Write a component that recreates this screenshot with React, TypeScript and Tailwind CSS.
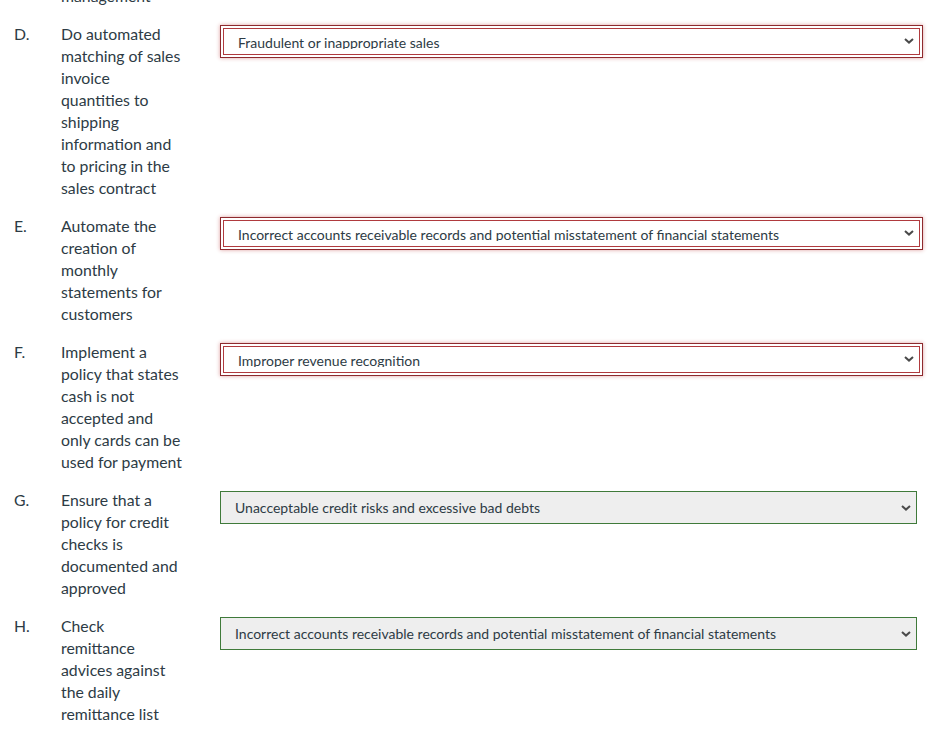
import React from "react";

type Row = { letter: string; lines: string[]; answer: string; state: "wrong" | "right" };

const rows: Row[] = [
  {
    letter: "D.",
    lines: ["Do automated", "matching of sales", "invoice", "quantities to", "shipping", "information and", "to pricing in the", "sales contract"],
    answer: "Fraudulent or inappropriate sales",
    state: "wrong",
  },
  {
    letter: "E.",
    lines: ["Automate the", "creation of", "monthly", "statements for", "customers"],
    answer: "Incorrect accounts receivable records and potential misstatement of financial statements",
    state: "wrong",
  },
  {
    letter: "F.",
    lines: ["Implement a", "policy that states", "cash is not", "accepted and", "only cards can be", "used for payment"],
    answer: "Improper revenue recognition",
    state: "wrong",
  },
  {
    letter: "G.",
    lines: ["Ensure that a", "policy for credit", "checks is", "documented and", "approved"],
    answer: "Unacceptable credit risks and excessive bad debts",
    state: "right",
  },
  {
    letter: "H.",
    lines: ["Check", "remittance", "advices against", "the daily", "remittance list"],
    answer: "Incorrect accounts receivable records and potential misstatement of financial statements",
    state: "right",
  },
];

function Chevron({ className }: { className?: string }) {
  return (
    <svg width="10" height="6" viewBox="0 0 10 6" className={className}>
      <path d="M1 1 L5 4.6 L9 1" fill="none" stroke="#4a4a4a" strokeWidth="2" />
    </svg>
  );
}

function WrongSelect({ answer }: { answer: string }) {
  return (
    <div className="mt-[2px] w-[703px] h-[33px] border border-[#8e2a2e] p-[2px] shadow-[0_0_4px_rgba(180,40,40,0.45)] bg-white">
      <div className="relative h-[27px] border border-[#b03a3e] bg-white pl-[14px]">
        <div className="mt-[5px] h-[15px] overflow-hidden text-[14px] leading-[18px] text-[#2d3b45] whitespace-nowrap">
          {answer}
        </div>
        <Chevron className="absolute right-[5px] top-[9px]" />
      </div>
    </div>
  );
}

function RightSelect({ answer }: { answer: string }) {
  return (
    <div className="relative mt-[2px] w-[697px] h-[33px] border border-[#3f7a3a] bg-[#eeeeee] pl-[14px]">
      <div className="pt-[6px] text-[14px] leading-[20px] text-[#2d3b45] whitespace-nowrap">{answer}</div>
      <Chevron className="absolute right-[5px] top-[13px]" />
    </div>
  );
}

export default function App() {
  return (
    <div
      className="bg-white w-[937px] h-[736px] overflow-hidden text-[#2d3b45]"
      style={{ fontFamily: "Lato, 'Noto Sans', sans-serif" }}
    >
      <div className="mt-[-15px] flex pl-[14px] text-[15.8px] leading-[22px]">
        <div className="w-[47px]" />
        <div className="w-[122px]">management</div>
      </div>
      <div className="flex flex-col gap-[16px] mt-[16px]">
        {rows.map((r) => (
          <div key={r.letter} className="flex pl-[14px]">
            <div className="w-[47px] text-[15.8px] leading-[22px]">{r.letter}</div>
            <div className="w-[122px] text-[15.8px] leading-[22px]">
              {r.lines.map((l, i) => (
                <div key={i} className="whitespace-nowrap">
                  {l}
                </div>
              ))}
            </div>
            <div className="ml-[37px]">
              {r.state === "wrong" ? <WrongSelect answer={r.answer} /> : <RightSelect answer={r.answer} />}
            </div>
          </div>
        ))}
      </div>
    </div>
  );
}
